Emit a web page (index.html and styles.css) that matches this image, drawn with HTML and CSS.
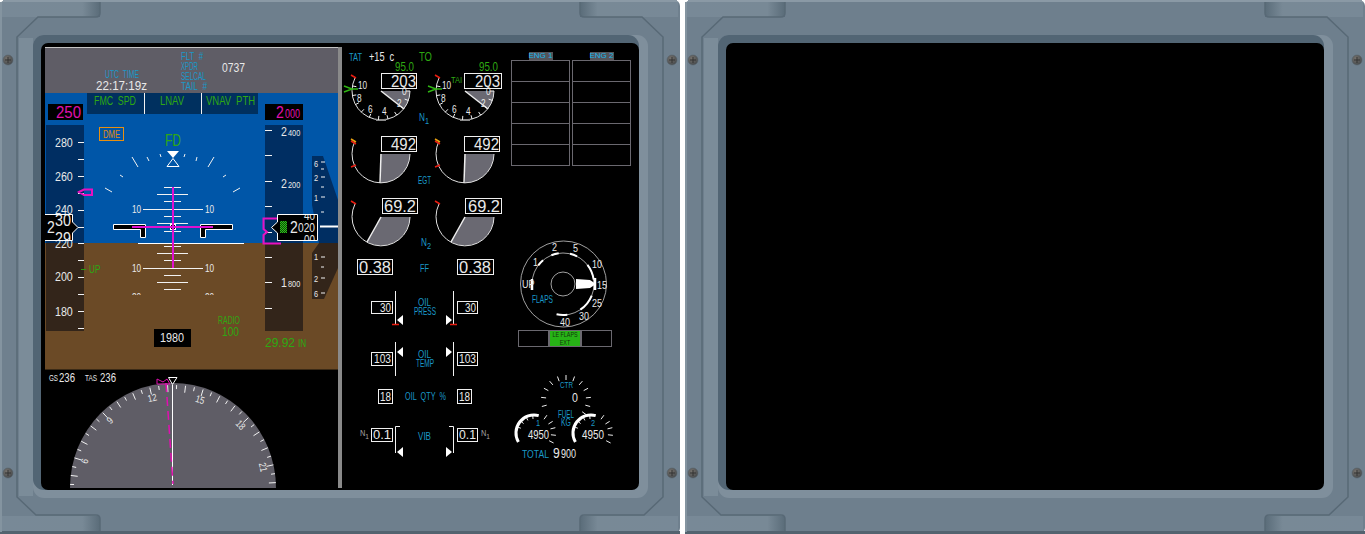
FILE: index.html
```html
<!DOCTYPE html>
<html lang="en">
<head>
    <meta charset="UTF-8">
    <meta name="viewport" content="width=device-width, initial-scale=1.0">
    <title>Flight Displays</title>
    <link rel="stylesheet" href="styles.css">
</head>
<body>
    <svg class="defs" width="0" height="0">
        <defs>
            <linearGradient id="tabShade" x1="0" x2="1" y1="0" y2="0">
                <stop offset="0" stop-color="#788997"/>
                <stop offset="0.82" stop-color="#788996"/>
                <stop offset="1" stop-color="#5a6c79"/>
            </linearGradient>
            <linearGradient id="tabShadeR" x1="1" x2="0" y1="0" y2="0">
                <stop offset="0" stop-color="#788997"/>
                <stop offset="0.82" stop-color="#788996"/>
                <stop offset="1" stop-color="#5a6c79"/>
            </linearGradient>
            <radialGradient id="screwFill" cx="0.4" cy="0.35" r="0.7">
                <stop offset="0" stop-color="#77736e"/>
                <stop offset="1" stop-color="#44484b"/>
            </radialGradient>
            <pattern id="hatchFill" width="2" height="2" patternUnits="userSpaceOnUse">
                <rect width="2" height="2" fill="#0a4a08"/>
                <rect width="1" height="1" fill="#2fc018"/>
                <rect x="1" y="1" width="1" height="1" fill="#2fc018"/>
            </pattern>
            <g id="screw">
                <circle r="5" fill="url(#screwFill)" stroke="#58636c" stroke-width="0.6"/>
                <path d="M-3 0H3M0 -3V3" stroke="#333" stroke-width="1"/>
            </g>
            <symbol id="bezel" viewBox="0 0 680 534">
                <rect x="0" y="0" width="680" height="534" rx="6" fill="#6f808e"/>
                <rect x="0" y="531" width="680" height="3" fill="#53636f"/>
                <rect x="3" y="0" width="674" height="2" fill="#8a99a5"/>
                <rect x="0" y="2" width="2" height="530" fill="#8494a0"/>
                <rect x="2" y="2" width="98" height="15" fill="url(#tabShade)"/>
                <rect x="580" y="2" width="98" height="15" fill="url(#tabShadeR)"/>
                <rect x="2" y="516" width="98" height="15" fill="url(#tabShade)"/>
                <rect x="580" y="516" width="98" height="15" fill="url(#tabShadeR)"/>
                <path class="frame-fill" d="M100 17H38L17 37V497L36 515H100V531H580V515H644L663 497V37L642 17H580V2H100Z"/>
                <rect class="frame-side" x="19" y="38" width="14" height="458"/>
                <path class="frame-edge" d="M100 2V13Q100 17 96 17H38L17 37V497L36 515H96Q100 515 100 519V531"/>
                <path class="frame-edge" d="M580 2V13Q580 17 584 17H642L663 37V497L644 515H584Q580 515 580 519V531"/>
                <rect x="33" y="35" width="615" height="463" rx="11" fill="#7f8f9c"/>
                <rect x="33" y="35" width="606" height="455" rx="11" fill="#526574"/>
                <use href="#screw" x="8" y="60"/>
                <use href="#screw" x="672" y="60"/>
                <use href="#screw" x="8" y="473"/>
                <use href="#screw" x="672" y="473"/>
            </symbol>
            <path id="tri-left" d="M397 0L403 -5V5Z"/>
            <g id="n1-dial">
                <path class="sector" d="M381 91H410A29 29 0 0 1 404 109Z"/>
                <path class="dial" d="M410 91A29 29 0 1 1 355 78"/>
                <path class="dial-grey" d="M376 120H386"/>
                <path class="needle" d="M381 91L404 109"/>
                <path class="red" d="M351 75L356 78"/>
            </g>
            <g id="egt-dial">
                <path class="sector" d="M381 154H410A29 29 0 0 1 381 183Z"/>
                <path class="dial" d="M410 154A29 29 0 1 1 355 141"/>
                <path class="needle" d="M381 154L380 183"/>
                <path class="red" d="M351 141L356 144M351 167L356 165"/>
                <path class="amber" d="M351 139L356 142"/>
            </g>
            <g id="n2-dial">
                <path class="sector" d="M381 217H410A29 29 0 0 1 367 242Z"/>
                <path class="dial" d="M410 217A29 29 0 1 1 355 204"/>
                <path class="needle" d="M381 217L367 242"/>
                <path class="red" d="M351 201L356 204"/>
            </g>
            <clipPath id="speedClip"><rect x="45" y="215" width="27" height="25"/></clipPath>
            <clipPath id="altClip"><rect x="278" y="215" width="39" height="25"/></clipPath>
            <clipPath id="ladderClip"><rect x="120" y="180" width="110" height="115"/></clipPath>
        </defs>
    </svg>

    <main class="panels">
        <section class="bezel">
            <svg class="bezel-art" viewBox="0 0 680 534"><use href="#bezel"/></svg>
            <div class="screen">
                <svg class="pfd" viewBox="45 47 293 441">
                    <rect class="c-top" x="45" y="47" width="293" height="2"/>
                    <rect class="c-grey" x="45" y="48" width="293" height="45"/>
                    <rect class="c-sky" x="45" y="93" width="293" height="150"/>
                    <rect class="c-ground" x="45" y="243" width="293" height="126"/>
                    <rect class="c-ground-edge" x="45" y="369" width="293" height="1"/>

                    <text class="cyan s10" x="181" y="60" textLength="22">FLT #</text>
                    <text class="cyan s10" x="181" y="70" textLength="17">XPDR</text>
                    <text class="cyan s10" x="181" y="80" textLength="25">SELCAL</text>
                    <text class="cyan s10" x="181" y="90" textLength="26">TAIL #</text>
                    <text class="white s13" x="222" y="72" textLength="23">0737</text>
                    <text class="cyan s10" x="105" y="78" textLength="34">UTC TIME</text>
                    <text class="white s12" x="96" y="90" textLength="51">22:17:19z</text>

                    <rect class="c-mode" x="87" y="93" width="171" height="21"/>
                    <path class="white-line" d="M144.500 93V114M201.500 93V114"/>
                    <text class="green s12" x="94" y="105" textLength="42">FMC SPD</text>
                    <text class="green s12" x="160" y="105" textLength="24">LNAV</text>
                    <text class="green s12" x="206" y="105" textLength="49">VNAV PTH</text>

                    <rect class="c-black" x="48" y="104" width="35" height="16"/>
                    <text class="magenta s17" x="56" y="118" textLength="25">250</text>
                    <rect class="c-black" x="265" y="104" width="38" height="16"/>
                    <text class="magenta s17" x="276" y="118">2</text>
                    <text class="magenta s13" x="285" y="118" textLength="15">000</text>

                    <rect class="c-tape" x="46" y="125" width="38" height="118"/>
                    <rect class="c-tape-dark" x="46" y="243" width="38" height="88"/>
                    <rect class="c-tape" x="265" y="125" width="38" height="118"/>
                    <rect class="c-tape-dark" x="265" y="243" width="38" height="88"/>
                    <path class="c-tape" d="M312 156H323L338 200V243H319L312 205Z"/>
                    <path class="c-tape-dark" d="M319 243H338V268L324 299H312V253Z"/>

                    <g id="speedTicks"></g>
                    <g id="altTicks"></g>
                    <text class="white s13" x="55" y="147">280</text>
                    <text class="white s13" x="55" y="181">260</text>
                    <text class="white s13" x="55" y="214">240</text>
                    <text class="white s13" x="55" y="248">220</text>
                    <text class="white s13" x="55" y="281">200</text>
                    <text class="white s13" x="55" y="316">180</text>
                    <text class="white s13" x="281" y="136">2</text>
                    <text class="white s9" x="288" y="136">400</text>
                    <text class="white s13" x="281" y="188">2</text>
                    <text class="white s9" x="288" y="188">200</text>
                    <text class="white s13" x="281" y="287">1</text>
                    <text class="white s9" x="288" y="287">800</text>

                    <text class="white s9" x="314" y="167">6</text>
                    <text class="white s9" x="314" y="181">2</text>
                    <text class="white s9" x="314" y="201">1</text>
                    <text class="white s9" x="314" y="260">1</text>
                    <text class="white s9" x="314" y="282">2</text>
                    <text class="white s9" x="314" y="297">6</text>
                    <path class="white-line" d="M321 162H325M321 169H324M321 177H325M321 187H324M321 197H325M321 212H324M321 257H325M321 267H324M321 278H325M321 293H325"/>
                    <path class="white-thick" d="M320 226.500H338"/>

                    <g class="ladder" clip-path="url(#ladderClip)">
                        <path class="white-line" d="M164 187.500H181M157 194.500H188M164 201.500H181M143 209.500H203M164 216.500H181M157 223.500H188M164 231.500H181M164 246.500H181M157 253.500H188M164 260.500H181M143 268.500H203M164 275.500H181M157 282.500H188M164 289.500H181"/>
                        <text class="white s10" x="132" y="213">10</text>
                        <text class="white s10" x="205" y="213">10</text>
                        <text class="white s10" x="132" y="272">10</text>
                        <text class="white s10" x="205" y="272">10</text>
                        <text class="white s10" x="132" y="301">20</text>
                        <text class="white s10" x="205" y="301">20</text>
                    </g>
                    <path class="white-thick thin" d="M138 243.500H244"/>

                    <path class="white-line" d="M132 157L138 167M147 157L149 161M160 154L161 157M214 157L208 167M197 157L196 161M185 154L184 157M120 175L123 177M226 175L223 177M105 188L112 192M240 188L233 192"/>
                    <path class="white-fill" d="M167 151H179L173 158Z"/>
                    <path class="hollow" d="M173 158.500L179 166.500H167Z"/>

                    <rect class="orange-box" x="99.500" y="127.500" width="24" height="13"/>
                    <text class="orange s11" x="103" y="138" textLength="17">DME</text>
                    <text class="green s17" x="165" y="146" textLength="16">FD</text>

                    <path class="magenta-line wide" d="M79 192L84 189.500H92V195H84Z"/>
                    <path class="wing" d="M113.500 224.500H145.500V237.500H140.500V229.500H113.500Z"/>
                    <path class="wing" d="M232.500 224.500H200.500V237.500H205.500V229.500H232.500Z"/>
                    <rect class="wing" x="170.500" y="224.500" width="5" height="5"/>
                    <path class="magenta-bar" d="M132 227H213M173 187V268"/>

                    <path class="readout" d="M44.500 214.500H72.500V222L78 227.500L72.500 233V240.500H44.500Z"/>
                    <g clip-path="url(#speedClip)">
                        <text class="white s17" x="47" y="233">2</text>
                        <text class="white s17" x="55" y="226" textLength="16">30</text>
                        <text class="white s17" x="55" y="244" textLength="16">29</text>
                    </g>
                    <path class="readout" d="M277.500 214.500H317.500V240.500H277.500V233L271.500 227.500L277.500 222Z"/>
                    <rect class="hatch" x="280" y="221" width="7" height="12"/>
                    <g clip-path="url(#altClip)">
                        <text class="white s17" x="290" y="233">2</text>
                        <text class="white s13" x="298" y="232" textLength="17">020</text>
                        <text class="white s13" x="304" y="220" textLength="11">40</text>
                        <text class="white s13" x="304" y="244" textLength="11">00</text>
                    </g>
                    <path class="magenta-line wide" d="M277 218.500H263.500V229L267 232L263.500 235V243.500H281"/>

                    <path class="green-line" d="M81 269.500H86"/>
                    <text class="green s10" x="89" y="273">UP</text>
                    <text class="green s10" x="218" y="324" textLength="22">RADIO</text>
                    <text class="green s13" x="222" y="336" textLength="17">100</text>
                    <rect class="c-black" x="154" y="329" width="37" height="18"/>
                    <text class="white s13" x="160" y="342" textLength="24">1980</text>
                    <text class="green s13" x="265" y="347" textLength="30">29.92</text>
                    <text class="green s10" x="298" y="347">IN</text>

                    <text class="white s9" x="49" y="381" textLength="9">GS</text>
                    <text class="white s13" x="59" y="382" textLength="16">236</text>
                    <text class="white s9" x="85" y="381" textLength="12">TAS</text>
                    <text class="white s13" x="100" y="382" textLength="16">236</text>

                    <path class="c-grey" d="M70 488A103 105 0 0 1 276 488Z"/>
                    <g id="compassTicks"></g>
                    <text class="white s10 mid" transform="rotate(-73 173 488)" x="173" y="399">6</text>
                    <text class="white s10 mid" transform="rotate(-43 173 488)" x="173" y="399">9</text>
                    <text class="white s10 mid" transform="rotate(-13 173 488)" x="173" y="399">12</text>
                    <text class="white s10 mid" transform="rotate(17 173 488)" x="173" y="399">15</text>
                    <text class="white s10 mid" transform="rotate(47 173 488)" x="173" y="399">18</text>
                    <text class="white s10 mid" transform="rotate(77 173 488)" x="173" y="399">21</text>
                    <path class="white-thick thin" d="M172.500 385V485"/>
                    <path class="magenta-dash" d="M166 383L173 484"/>
                    <path class="magenta-line" d="M157 384V379L163 382L167 379L170 384Z"/>
                    <path class="hollow" d="M168.500 377.500H177L172.500 384.500Z"/>
                </svg>

                <div class="divider"></div>

                <svg class="engines" viewBox="342 47 164 441">
                    <text class="cyan s10" x="349" y="61" textLength="13">TAT</text>
                    <text class="white s12" x="369" y="61" textLength="25">+15 c</text>
                    <text class="green s13" x="419" y="61" textLength="13">TO</text>

                    <use href="#n1-dial"/>
                    <use href="#n1-dial" x="84"/>
                    <g id="n1Ticks"></g>
                    <path class="green-arrow" d="M344 86L352 89L344 92M352 89H358"/>
                    <path class="green-arrow" d="M428 86L436 89L428 92M436 89H442"/>
                    <text class="green s13" x="395" y="71" textLength="19">95.0</text>
                    <text class="green s13" x="479" y="71" textLength="19">95.0</text>
                    <rect class="box" x="381.500" y="73.500" width="35" height="15"/>
                    <rect class="box" x="464.500" y="73.500" width="37" height="15"/>
                    <text class="white s16" x="391" y="87" textLength="25">203</text>
                    <text class="white s16" x="475" y="87" textLength="25">203</text>
                    <text class="white s10" x="358" y="89">10</text>
                    <text class="white s10" x="357" y="102">8</text>
                    <text class="white s10" x="368" y="113">6</text>
                    <text class="white s10" x="382" y="115">4</text>
                    <text class="white s10" x="397" y="107">2</text>
                    <text class="white s10" x="402" y="95">0</text>
                    <text class="white s10" x="442" y="89">10</text>
                    <text class="white s10" x="441" y="102">8</text>
                    <text class="white s10" x="452" y="113">6</text>
                    <text class="white s10" x="466" y="115">4</text>
                    <text class="white s10" x="481" y="107">2</text>
                    <text class="white s10" x="486" y="95">0</text>
                    <text class="green s9" x="451" y="83" textLength="11">TAI</text>
                    <text class="cyan s10" x="419" y="121">N<tspan class="s9" dy="3">1</tspan></text>

                    <use href="#egt-dial"/>
                    <use href="#egt-dial" x="84"/>
                    <rect class="box" x="381.500" y="136.500" width="35" height="15"/>
                    <rect class="box" x="464.500" y="136.500" width="35" height="15"/>
                    <text class="white s16" x="391" y="150" textLength="25">492</text>
                    <text class="white s16" x="474" y="150" textLength="25">492</text>
                    <text class="cyan s10" x="418" y="184" textLength="13">EGT</text>

                    <use href="#n2-dial"/>
                    <use href="#n2-dial" x="84"/>
                    <rect class="box" x="382.500" y="198.500" width="35" height="15"/>
                    <rect class="box" x="465.500" y="198.500" width="36" height="15"/>
                    <text class="white s16" x="384" y="212" textLength="32">69.2</text>
                    <text class="white s16" x="468" y="212" textLength="32">69.2</text>
                    <text class="cyan s10" x="421" y="246">N<tspan class="s9" dy="3">2</tspan></text>

                    <rect class="box" x="357.500" y="259.500" width="35" height="15"/>
                    <rect class="box" x="457.500" y="259.500" width="36" height="15"/>
                    <text class="white s16" x="359" y="273" textLength="32">0.38</text>
                    <text class="white s16" x="459" y="273" textLength="32">0.38</text>
                    <text class="cyan s10" x="420" y="272" textLength="9">FF</text>

                    <path class="white-line" d="M395.500 291V325M453.500 291V325"/>
                    <use href="#tri-left" class="white-fill" y="320"/>
                    <use href="#tri-left" class="white-fill" transform="translate(849 0) scale(-1 1)" y="320"/>
                    <path class="red" d="M392 324.500H399M450 324.500H457"/>
                    <rect class="box" x="371.500" y="301.500" width="21" height="12"/>
                    <rect class="box" x="457.500" y="301.500" width="20" height="12"/>
                    <text class="white s13" x="380" y="312" textLength="11">30</text>
                    <text class="white s13" x="465" y="312" textLength="11">30</text>
                    <text class="cyan s10" x="418" y="306" textLength="13">OIL</text>
                    <text class="cyan s10" x="414" y="315" textLength="22">PRESS</text>

                    <path class="white-line" d="M395.500 342V376M453.500 342V376"/>
                    <use href="#tri-left" class="white-fill" y="352"/>
                    <use href="#tri-left" class="white-fill" transform="translate(849 0) scale(-1 1)" y="352"/>
                    <rect class="box" x="371.500" y="352.500" width="21" height="13"/>
                    <rect class="box" x="457.500" y="352.500" width="20" height="13"/>
                    <text class="white s13" x="374" y="363" textLength="17">103</text>
                    <text class="white s13" x="459" y="363" textLength="17">103</text>
                    <text class="cyan s10" x="418" y="358" textLength="13">OIL</text>
                    <text class="cyan s10" x="416" y="367" textLength="18">TEMP</text>

                    <rect class="box" x="378.500" y="389.500" width="14" height="14"/>
                    <rect class="box" x="457.500" y="389.500" width="14" height="14"/>
                    <text class="white s13" x="380" y="401" textLength="11">18</text>
                    <text class="white s13" x="459" y="401" textLength="11">18</text>
                    <text class="cyan s10" x="405" y="400" textLength="41">OIL QTY %</text>

                    <path class="white-line" d="M400 426.500H395.500V453M449 426.500H453.500V453"/>
                    <use href="#tri-left" class="white-fill" y="452"/>
                    <use href="#tri-left" class="white-fill" transform="translate(849 0) scale(-1 1)" y="452"/>
                    <rect class="box" x="371.500" y="428.500" width="21" height="13"/>
                    <rect class="box" x="457.500" y="428.500" width="20" height="13"/>
                    <text class="white s13" x="373" y="439" textLength="18">0.1</text>
                    <text class="white s13" x="459" y="439" textLength="17">0.1</text>
                    <text class="grey s9" x="360" y="436">N<tspan class="s8" dy="3">1</tspan></text>
                    <text class="grey s9" x="481" y="436">N<tspan class="s8" dy="3">1</tspan></text>
                    <text class="cyan s10" x="418" y="440" textLength="13">VIB</text>
                </svg>

                <div class="status">
                    <div class="eng-tables">
                        <div class="eng-col">
                            <span class="eng-label">ENG 1</span>
                            <div class="eng-row"></div>
                            <div class="eng-row"></div>
                            <div class="eng-row"></div>
                            <div class="eng-row"></div>
                            <div class="eng-row"></div>
                        </div>
                        <div class="eng-col">
                            <span class="eng-label">ENG 2</span>
                            <div class="eng-row"></div>
                            <div class="eng-row"></div>
                            <div class="eng-row"></div>
                            <div class="eng-row"></div>
                            <div class="eng-row"></div>
                        </div>
                    </div>

                    <svg class="flaps" viewBox="506 236 132 94">
                        <circle class="ring" cx="563.500" cy="284" r="43"/>
                        <circle class="ring" cx="563" cy="284" r="12"/>
                        <path class="ring" d="M532 284A31 31 0 1 1 563 315"/>
                        <g id="flapMarks"></g>
                        <path class="white-fill" d="M576 279L590 280L596 284L590 288L576 289Z"/>
                        <path class="flap-bar" d="M595 278V290M532 279V290"/>
                        <text class="white s11" x="522" y="288">UP</text>
                        <text class="white s11" x="533" y="266">1</text>
                        <text class="white s11" x="552" y="251">2</text>
                        <text class="white s11" x="573" y="252">5</text>
                        <text class="white s11" x="592" y="268">10</text>
                        <text class="white s11" x="597" y="289">15</text>
                        <text class="white s11" x="592" y="307">25</text>
                        <text class="white s11" x="579" y="320">30</text>
                        <text class="white s11" x="560" y="326">40</text>
                        <text class="cyan s11" x="532" y="303" textLength="21">FLAPS</text>
                    </svg>

                    <div class="le-row">
                        <div class="le-cell"></div>
                        <div class="le-cell active"><span class="le-text">LE FLAPS<br>EXT</span></div>
                        <div class="le-cell"></div>
                    </div>

                    <svg class="fuel" viewBox="506 370 132 95">
                        <g id="fuelTicks"></g>
                        <path class="fuel-arc" d="M518.400 442A18 18 0 0 1 538.700 415.600"/>
                        <path class="fuel-arc" d="M575.400 442A18 18 0 0 1 595.700 415.600"/>
                        <text class="cyan s9" x="560" y="388" textLength="13">CTR</text>
                        <text class="white s13" x="572" y="402">0</text>
                        <text class="cyan s10" x="558" y="418" textLength="16">FUEL</text>
                        <text class="cyan s10" x="561" y="426" textLength="10">KG</text>
                        <text class="cyan s9" x="536" y="426">1</text>
                        <text class="cyan s9" x="591" y="426">2</text>
                        <text class="white s13" x="528" y="439" textLength="21">4950</text>
                        <text class="white s13" x="582" y="439" textLength="22">4950</text>
                        <text class="cyan s11" x="522" y="458" textLength="27">TOTAL</text>
                        <text class="white s15" x="553" y="458">9</text>
                        <text class="white s13" x="561" y="458" textLength="15">900</text>
                    </svg>
                </div>
            </div>
        </section>

        <section class="bezel">
            <svg class="bezel-art" viewBox="0 0 680 534"><use href="#bezel"/></svg>
            <div class="screen"></div>
        </section>
    </main>

    <script src="app.js"></script>
</body>
</html>
```
FILE: styles.css
```css
html, body {
    margin: 0;
    padding: 0;
    background: #fff;
    overflow: hidden;
}
.defs {
    position: absolute;
}
.panels {
    display: grid;
    grid-template-columns: 680px 680px;
    gap: 5px;
    height: 534px;
}
.bezel {
    position: relative;
    padding: 43px 41px 44px 41px;
}
.bezel-art {
    position: absolute;
    left: 0;
    top: 0;
    width: 680px;
    height: 534px;
}
.frame-edge {
    fill: none;
    stroke: #586976;
    stroke-width: 1.500;
}
.frame-fill {
    fill: #6e7f8d;
}
.frame-side {
    fill: #7b8c99;
}
.screen {
    position: relative;
    display: flex;
    box-sizing: border-box;
    width: 598px;
    height: 447px;
    padding: 4px 0 0 4px;
    background: #000;
    border-radius: 7px;
    overflow: hidden;
}
.pfd {
    width: 293px;
    height: 441px;
    flex: none;
}
.divider {
    width: 4px;
    height: 441px;
    flex: none;
    background: #8a8a8a;
}
.engines {
    width: 164px;
    height: 441px;
    flex: none;
}
.status {
    width: 132px;
    flex: none;
    padding-top: 5px;
}

svg text {
    font-family: "Liberation Sans", sans-serif;
    word-spacing: 3px;
}
.s8 { font-size: 8px; }
.s9 { font-size: 9px; }
.s10 { font-size: 10px; }
.s11 { font-size: 11px; }
.s12 { font-size: 12px; }
.s13 { font-size: 13px; }
.s15 { font-size: 15px; }
.s16 { font-size: 16px; }
.s17 { font-size: 17px; }
.cyan { fill: #1a98c8; }
.white { fill: #e9e9e9; }
.grey { fill: #a5a5a5; }
.green { fill: #2ea812; }
.magenta { fill: #e010b0; }
.orange { fill: #e08a10; }
.mid { text-anchor: middle; }

.c-top { fill: #c4c4c4; }
.c-grey { fill: #5f5d66; }
.c-sky { fill: #0056a8; }
.c-ground { fill: #6b4a26; }
.c-ground-edge { fill: #3a2a16; }
.c-mode { fill: #00305f; }
.c-black { fill: #000; }
.c-tape { fill: #002e62; }
.c-tape-dark { fill: #33251a; }

.white-line {
    fill: none;
    stroke: #f2f2f2;
    stroke-width: 1;
}
.white-thick {
    fill: none;
    stroke: #fff;
    stroke-width: 2;
}
.white-thick.thin {
    stroke-width: 1;
}
.white-fill {
    fill: #fff;
}
.hollow {
    fill: none;
    stroke: #fff;
    stroke-width: 1;
}
.orange-box {
    fill: none;
    stroke: #e88f10;
    stroke-width: 1;
}
.magenta-line {
    fill: none;
    stroke: #e010b0;
    stroke-width: 1;
}
.magenta-line.wide {
    stroke: #e810c0;
    stroke-width: 2;
}
.magenta-bar {
    fill: none;
    stroke: #e010d0;
    stroke-width: 2;
}
.magenta-dash {
    fill: none;
    stroke: #e010b0;
    stroke-width: 1.500;
    stroke-dasharray: 9 5;
}
.wing {
    fill: #000;
    stroke: #fff;
    stroke-width: 1;
}
.readout {
    fill: #000;
    stroke: #fff;
    stroke-width: 1;
}
.hatch {
    fill: url(#hatchFill);
}
.green-line {
    fill: none;
    stroke: #2a9a10;
    stroke-width: 1;
}
.green-arrow {
    fill: none;
    stroke: #2fb512;
    stroke-width: 1.500;
}
.sector {
    fill: #6a6972;
}
.dial {
    fill: none;
    stroke: #e0e0e0;
    stroke-width: 1;
}
.dial-grey {
    fill: none;
    stroke: #8a8a8a;
    stroke-width: 2;
}
.needle {
    fill: none;
    stroke: #eee;
    stroke-width: 1.500;
}
.red {
    fill: none;
    stroke: #e81c10;
    stroke-width: 1.500;
}
.amber {
    fill: none;
    stroke: #e8a010;
    stroke-width: 1.500;
}
.box {
    fill: #000;
    stroke: #f0f0f0;
    stroke-width: 1;
}

.eng-tables {
    display: grid;
    grid-template-columns: 59px 59px;
    gap: 2px;
    padding-left: 5px;
}
.eng-col {
    display: flex;
    flex-direction: column;
    align-items: center;
}
.eng-label {
    width: 24px;
    height: 8px;
    background: #555459;
    color: #18b8ee;
    font: 8px/8px "Liberation Sans", sans-serif;
    text-align: center;
    white-space: nowrap;
}
.eng-row {
    box-sizing: border-box;
    width: 100%;
    height: 22px;
    border: 1px solid #6a686f;
}
.eng-row + .eng-row {
    height: 21px;
    border-top: none;
}
.flaps {
    display: block;
    width: 132px;
    height: 94px;
    margin-top: 70px;
}
.ring {
    fill: none;
    stroke: #c8c8c8;
    stroke-width: 0.800;
}
.flap-bar {
    fill: none;
    stroke: #fff;
    stroke-width: 2.500;
}
.flap-arc {
    fill: none;
    stroke: #fff;
    stroke-width: 2;
}
.le-row {
    display: grid;
    grid-template-columns: 31px 32px 31px;
    margin-left: 12px;
    width: 94px;
}
.le-cell {
    box-sizing: border-box;
    height: 17px;
    border: 1px solid #6a686f;
    font: 7.500px/7.500px "Liberation Sans", sans-serif;
    text-align: center;
    color: #12340c;
    overflow: hidden;
}
.le-cell.active {
    background: #27b316;
}
.le-text {
    display: block;
    width: 40px;
    margin-left: -5px;
    transform: scaleX(0.72);
}
.fuel {
    display: block;
    width: 132px;
    height: 95px;
    margin-top: 23px;
}
.fuel-arc {
    fill: none;
    stroke: #fff;
    stroke-width: 3;
}
.fuel-tick {
    fill: none;
    stroke: #eee;
    stroke-width: 1;
}
```
FILE: app.js
```js
const SVG_NS = 'http://www.w3.org/2000/svg';

function addLine(group, x1, y1, x2, y2, className) {
    const line = document.createElementNS(SVG_NS, 'line');
    line.setAttribute('x1', x1);
    line.setAttribute('y1', y1);
    line.setAttribute('x2', x2);
    line.setAttribute('y2', y2);
    line.setAttribute('class', className);
    group.appendChild(line);
}

// bearing is clockwise from straight up
function addTick(group, cx, cy, r1, r2, bearing, className) {
    const a = bearing * Math.PI / 180;
    addLine(group,
        cx + r1 * Math.sin(a), cy - r1 * Math.cos(a),
        cx + r2 * Math.sin(a), cy - r2 * Math.cos(a),
        className);
}

function addArc(group, cx, cy, r, from, to) {
    const a = from * Math.PI / 180;
    const b = to * Math.PI / 180;
    const path = document.createElementNS(SVG_NS, 'path');
    path.setAttribute('d', `M${cx + r * Math.sin(a)} ${cy - r * Math.cos(a)}A${r} ${r} 0 0 1 ${cx + r * Math.sin(b)} ${cy - r * Math.cos(b)}`);
    path.setAttribute('class', 'flap-arc');
    group.appendChild(path);
}

const speedTicks = document.getElementById('speedTicks');
for (let i = 0; i < 12; i++) {
    const y = Math.round(142 + i * 16.9) + 0.5;
    addLine(speedTicks, 78, y, 84, y, 'white-line');
}

const altTicks = document.getElementById('altTicks');
for (let i = 0; i < 8; i++) {
    const y = Math.round(130 + i * 25.4) + 0.5;
    addLine(altTicks, 265, y, 272, y, 'white-line');
}

// heading labels sit 133 degrees off the lubber line
const compassTicks = document.getElementById('compassTicks');
for (let hdg = 45; hdg <= 225; hdg += 5) {
    const bearing = hdg - 133;
    if (Math.abs(bearing) > 90) continue;
    const inner = hdg % 10 === 0 ? 96 : 99;
    addTick(compassTicks, 173, 488, inner, 103, bearing, 'white-line');
}

const n1Ticks = document.getElementById('n1Ticks');
[0, 84].forEach(dx => {
    for (let b = -90; b <= 100; b += 19) {
        addTick(n1Ticks, 381 + dx, 91, 25, 29, b + 180, 'white-line');
    }
});

const flapMarks = document.getElementById('flapMarks');
[[-53, -40], [-22, -8], [13, 27], [52, 82], [112, 146], [172, 192]].forEach(([from, to]) => {
    addArc(flapMarks, 563, 284, 31, from, to);
});

const fuelTicks = document.getElementById('fuelTicks');
[-105, -84, -62, -41, -20, 0, 20, 41, 62, 84, 105, 126].forEach(b => {
    addTick(fuelTicks, 566, 400, 20, 25, b, 'fuel-tick');
});
[534, 591].forEach(cx => {
    [36, 58, 76, 96, 117].forEach(b => addTick(fuelTicks, cx, 433, 17, 22, b, 'fuel-tick'));
    [-70, -48, -26, -4].forEach(b => addTick(fuelTicks, cx, 433, 14, 18, b, 'fuel-tick'));
});

// the display font is narrow: squeeze every svg label to fit its slot
document.querySelectorAll('svg text').forEach(text => {
    if (!text.hasAttribute('textLength')) {
        text.setAttribute('textLength', (text.getComputedTextLength() * 0.82).toFixed(1));
    }
    text.setAttribute('lengthAdjust', 'spacingAndGlyphs');
});
```
